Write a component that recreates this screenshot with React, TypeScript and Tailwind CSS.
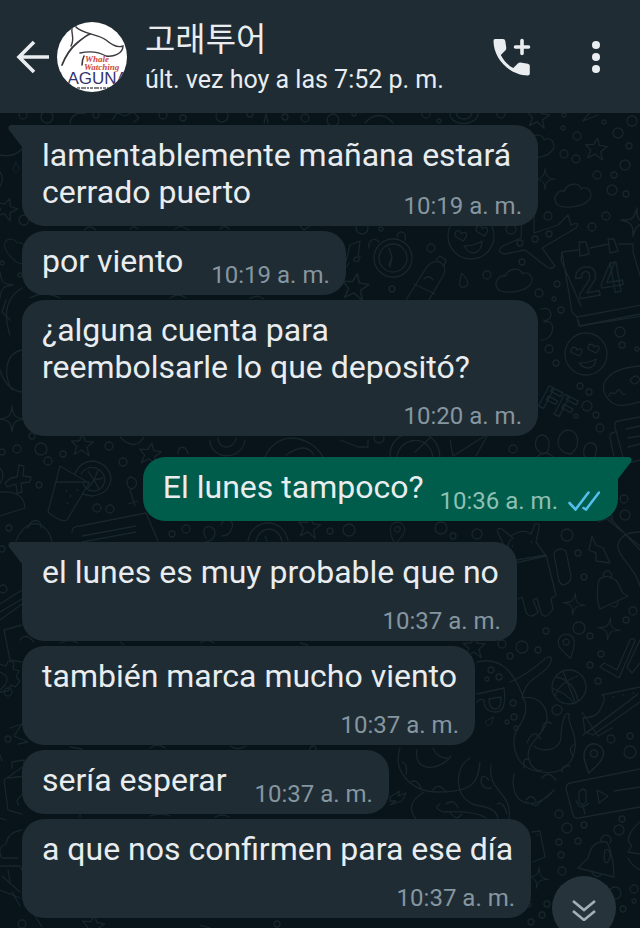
import clsx from "clsx";

type Message = {
  id: number;
  text: string;
  time: string;
  mine?: boolean;
  tail?: boolean;
  // where the time goes: beside the text, on its own row, or tucked into the last text line
  layout: "inline" | "stacked" | "tucked";
};

const messages: Message[] = [
  { id: 1, text: "lamentablemente mañana estará cerrado puerto", time: "10:19 a. m.", tail: true, layout: "tucked" },
  { id: 2, text: "por viento", time: "10:19 a. m.", layout: "inline" },
  { id: 3, text: "¿alguna cuenta para reembolsarle lo que depositó?", time: "10:20 a. m.", layout: "stacked" },
  { id: 4, text: "El lunes tampoco?", time: "10:36 a. m.", mine: true, tail: true, layout: "inline" },
  { id: 5, text: "el lunes es muy probable que no", time: "10:37 a. m.", tail: true, layout: "stacked" },
  { id: 6, text: "también marca mucho viento", time: "10:37 a. m.", layout: "stacked" },
  { id: 7, text: "sería esperar", time: "10:37 a. m.", layout: "inline" },
  { id: 8, text: "a que nos confirmen para ese día", time: "10:37 a. m.", layout: "stacked" },
];

const dots = [
  [23, 115, 4], [47, 117, 6], [96, 115, 3], [163, 115, 4], [183, 118, 3], [222, 116, 6], [250, 114, 3], [285, 117, 3], [305, 118, 4],
  [333, 120, 6], [354, 114, 2], [426, 114, 4], [439, 121, 2], [501, 114, 4], [564, 115, 2], [604, 122, 2], [632, 121, 5],
  [563, 128, 2], [577, 136, 4], [618, 133, 5], [629, 146, 3], [564, 154, 4], [576, 159, 4], [625, 165, 5], [597, 175, 4], [614, 175, 3],
  [612, 190, 5], [626, 194, 3], [548, 216, 4], [606, 216, 4], [592, 227, 4], [535, 239, 3], [549, 234, 3], [520, 243, 3], [511, 229, 5],
  [431, 248, 4], [392, 289, 3], [487, 275, 4], [522, 262, 3], [539, 293, 4], [557, 284, 3], [554, 299, 2], [561, 310, 3], [24, 220, 5],
  [20, 275, 2], [2, 263, 2], [362, 228, 6], [381, 229, 2], [549, 349, 4], [556, 363, 3], [620, 332, 5], [622, 345, 3], [637, 349, 2],
  [580, 386, 3], [589, 392, 3], [587, 406, 5], [576, 416, 2], [596, 415, 3], [600, 428, 4], [513, 449, 4], [379, 438, 5], [2, 452, 3],
  [17, 449, 4], [41, 449, 6], [48, 461, 4], [63, 454, 3], [32, 436, 3], [109, 446, 4], [123, 462, 4], [39, 485, 3], [97, 508, 4],
  [110, 509, 4], [9, 528, 3], [2, 549, 3], [3, 589, 4], [172, 534, 3], [186, 529, 4], [624, 499, 4], [609, 490, 3], [625, 515, 5],
  [330, 531, 3], [349, 530, 6], [441, 528, 6], [453, 536, 3], [477, 534, 5], [567, 535, 6], [578, 553, 3], [584, 577, 3],
  [633, 611, 4], [626, 620, 3], [579, 628, 6], [590, 636, 3], [546, 631, 3], [522, 647, 6], [538, 650, 3], [502, 644, 4], [510, 656, 3],
  [601, 654, 3], [590, 665, 3], [598, 681, 3], [491, 670, 3], [499, 677, 3], [487, 679, 2], [557, 710, 5], [514, 717, 3], [507, 722, 2],
  [513, 703, 3], [516, 728, 2], [611, 739, 4], [630, 736, 3], [630, 752, 6], [559, 814, 4], [567, 828, 5], [584, 825, 3], [622, 819, 3],
  [619, 830, 5], [559, 842, 3], [578, 841, 3], [561, 855, 3], [562, 871, 4], [615, 893, 6], [634, 889, 4], [623, 909, 3], [634, 901, 2],
  [547, 904, 3], [542, 915, 3], [531, 922, 3], [529, 905, 2], [8, 739, 3], [22, 924, 4], [277, 924, 3], [8, 692, 4], [313, 749, 3],
];

const star = "M0-11 3-4 11-4 5 2 8 10 0 5-7 10-5 2-11-3-3-4Z";
const spark = "M0-13C1-3 3-1 13 0 3 1 1 3 0 13-1 3-3 1-13 0-3-1-1-3 0-13Z";
const pin = "M0 14C-5 6-8 3-8-3A8 8 0 0 1 8-3C8 3 4 7 0 14ZM3-3A3 3 0 1 1-3-3 3 3 0 0 1 3-3";
const cloud = "M-17 6C-22-2-12-9-8-6-4-14 8-13 9-6 17-9 22 2 14 7 8 12-12 12-17 6Z";
const drop = "M0-7C4-1 5 2 4 5 2 8-3 8-4 5-5 2-2-2 0-7Z";

const doodles: [string, string][] = [
  [star, "translate(538 117) rotate(10)"],
  [star, "translate(596 149) rotate(8)"],
  [star, "translate(6 209) rotate(20)"],
  [star, "translate(355 287) rotate(10) scale(1.2)"],
  [star, "translate(82 445) rotate(5)"],
  [star, "translate(150 454) rotate(10)"],
  [star, "translate(309 527) rotate(10)"],
  [star, "translate(474 647) rotate(4)"],
  [star, "translate(93 926) rotate(10)"],
  [spark, "translate(545 179) scale(.8)"],
  [spark, "translate(635 222) rotate(8) scale(1.1)"],
  [spark, "translate(0 285)"],
  [spark, "translate(12 419)"],
  [spark, "translate(574 604) rotate(8) scale(.85)"],
  [spark, "translate(609 629) rotate(8) scale(.85)"],
  [spark, "translate(538 878) rotate(8) scale(.8)"],
  [pin, "translate(567 645) rotate(-15)"],
  [pin, "translate(593 757) rotate(15) scale(1.2)"],
  [pin, "translate(397 532) rotate(10) scale(.9)"],
  [cloud, "translate(573 196) rotate(-8)"],
  [cloud, "translate(514 281) rotate(-8)"],
  [cloud, "translate(536 147) rotate(-8)"],
  [cloud, "translate(17 251) rotate(50) scale(.8)"],
  [drop, "translate(463 280) rotate(-10)"],
  [drop, "translate(16 167) scale(.7)"],
  [drop, "translate(490 721) rotate(40) scale(.7)"],
];

const scenes = [
  // header edge: cake, shirt, rings, paper plane
  "M70 124c0-8 8-13 15-10M112 120l5-7 8 3 8-4 6 6-5 4M264 123l2-9 2 9M365 123c8-10 20-10 28 0M450 113c-1 14 28 14 28 0M456 113c2 8 14 8 16 0M583 121l7-9M583 121l15-6",
  // whale fin and balloons on the left margin
  "M0 155q14 3 22-6M0 172q5 7 0 14M22 288C2 300 5 320 10 335M6 300l-4 12 8 8M22 350C5 353 3 375 12 390M0 370q6 20 22 22",
  // notes, alarm clock, bottle
  "M346 262l4-17 10-4-2 16M346 262q-6-2-4 4t7-3M358 257q-5 0-4 4 6 2 6-5",
  "M412 258a19 19 0 1 1-38 0 19 19 0 0 1 38 0M407 258a14 14 0 1 1-28 0 14 14 0 0 1 28 0M389 248l3 9-3 8M392 257l-2 10M369 248c-1-10 7-10 10-6M397 237c1-8 10-6 8 3",
  "M406 300l20-32q5-8 14-6 8 6 3 14l-16 27M436 260l4-4 6 4-2 6M414 284l21 10M424 279q5-5 9 1",
  // smiling faces
  "M494 236a23 23 0 1 1-46 0 23 23 0 0 1 46 0M455 236c0-8 6-6 6-2 4-4 9 0 2 7ZM476 231c0-8 6-6 6-2 4-4 9 0 2 7ZM464 246q10 0 18-5 0 10-8 12-6 0-10-7",
  "M607 354a21 21 0 1 1-42 0 21 21 0 0 1 42 0M571 352c0-7 6-5 6-2 4-3 8 0 2 6ZM588 349c0-7 6-5 6-2 4-3 8 0 2 6ZM579 363q10 0 17-4-1 8-7 9-6 0-10-5",
  // plane
  "M534 215v18l24-8 10-10 3 10q10-4 5 3l-34 20 13 18q-3 4-8 1l-22-17-20 4q-10-2-2-8l18-8 1-22",
  // calendar
  "M578 250l-16 2 10 60 5 5 65-12M562 252l-1 8 20 46M590 248l19-4M619 244h14v8l9 30M579 242h7l3 12-9 2ZM608 239h6l4 12-8 2ZM577 317l2 9 63-10",
  // doughnut and ice cream behind the third bubble
  "M640 366c-30 2-42 16-34 30 8 15 25 8 34 6M609 396c2-8 5 2 8-5 4-5 4 6 8 3M630 380q7-8 10 0-6 8-10 0M541 309c14-4 12 14 2 11M541 340c14 0 16-22 3-18M578 320l2 6 60-12",
  // balloons, stopwatch, newspaper
  "M541 453c-9-5-6-19 2-18 8 2 8 16 1 19ZM566 453c-14-6-7-23 2-23 10 0 14 15 3 24ZM588 460c-8-5-4-19 4-17 8 2 4 13 0 18M537 457q8-8 16 0",
  "M390 457c-2-30 48-36 50 0M397 457c2-20 32-24 36 0M415 452l16-15M450 440l3 16 35-22-12 22M340 440l18 7h10v-7",
  "M640 417l-22 4q-4 1-3 6l8 30M615 432q-6 1-5 6l4 18M626 429l14-3M628 438l12-2M628 447l12-3M602 470l38-10",
  // drink with lemon, lollipop, wallet
  "M60 466l29 17-22 37q-6 3-19-8ZM55 482l34 0M75 474q5-13 19-13 16 4 17 18-2 15-19 17l-10-2M81 474c8-12 24-6 24 7-4 14-20 12-22 2M94 480l-6-9M94 480l4-10M94 480l9-2M94 480l5 9M94 480l-6 8M66 491h1M70 496h1M77 490h1M67 503h1",
  "M130 477a6 6 0 1 1 1 12 7 7 0 0 1-1-12M130 490l5 16M128 504l10-3M11 478l6-1 2-12 5 1-1 10 8 1-1 5-9 1 1 9-5 1-1-9-9 3-2-4ZM0 492q24-2 25 16L0 516M0 468q6 7 0 15",
  "M72 532q0-6 8-6l66-13 12 28M82 536l54-10M82 542l54-10M16 541c10-24 30-22 36 0M28 528c2-10 14-10 13 0",
  "M210 440c0 20 32 22 35 0M218 438c0 12 16 12 18 0M265 457c12-28 46-22 58 0M286 455q20-14 28 0M120 437q15 15 24 0M178 454c0-9 8-9 10 0",
  // quotes and compass above the fifth bubble
  "M206 538c-8-14 8-14 9-6 0 6-4 9-9 10M221 525c3-8 14-6 11 3-2 6-6 8-10 8M248 541c4-24 36-24 40 0M256 541c4-16 22-16 26 0M265 536l2 5",
  // robot
  "M509 552c-2-8 0-12 4-14l-11-9q-6-2-4 4l9 19ZM511 536q12-8 20-2l4-10q6-1 4 4l-3 14 10 14-35 8M516 560l30-5 10 40-5 4 2 10q-8 12-12 4l-4-15-4 2 5 12q-8 8-12 0l-4-15-4 2M554 555q0-6 8-6l4 2 5 25q0 8-9 9l-3-4ZM512 546h1M531 542h1",
  // bolt, guitar, bell
  "M592 536l-3 14 7 3 0 8 14 2-7-15-7-3ZM598 522l12-4 30 32M608 520l32 26M640 532q-18 0-22 12c-2 12 18 24 22 42M607 516q9-2 4 6",
  "M598 585c0-10 12-12 20-2 4 8 2 9 10 13l-28 13q-4-8-2-24M604 577a4 4 0 1 1 6 1M612 606q5 3 6-4",
  // check marks, ball, sneaker
  "M600 667l4-4 13 7 13-30q4-3 5 1l-16 37ZM640 640l-13 27 5 6 8-10M586 687a17 17 0 1 1-34 0 17 17 0 0 1 34 0M556 677q18 3 22 24M563 671l12 31M578 676q-18 6-23 20M552 688q16 6 22 16M602 695q4 2 1 8c-4 12-8 14-20 15l2 14 8 3 47-33M602 695l38-8M588 732l50-38M613 697h1M623 695h1M633 693h1",
  // octopus
  "M477 662c24-6 38 10 48 40 4 15-8 25-10 32-4 16 4 32 18 36 25 8 40-4 42-22 2-18-8-22-6-34-4-4-8 10-8 24-2 14-20 14-27 8M510 682c10-4 20-10 36-24q8-4 4 6c-8 14-24 12-28 34 18-4 28 12 24 26-4 12-18 18-18 32 2 12 10 16 14 14",
  "M477 694l27-6q3 24-8 24-12 0-12-12-4-2-7 2M489 699l12-2q0 13-6 12-6 0-6-10M400 748c-8 24 12 44 38 44 36 0 40-10 42-30M417 750c-4 22 22 22 34 6M433 748q4 10 14 10M470 758c-16 8-18 44 10 48 14 2 18 8 18 14M491 765c-4 28 22 26 18 54M514 774c-6 30 20 40 40 16l-18 16-10-4M424 792q-20 12-8 27M440 804q-8 4 4 8 30-2 42 6M446 804q8-6 12 4M450 812q6 10 12 2",
  "M402 762q6 2 4 12M411 782q6-4 11 8M433 790q6-8 13 2M489 780q-8-8-8 2 2 8 10 6M497 804q6-4 10 10M541 739q-8-12-14 4M530 760q-8-4-6 8M552 724q-8-6-10 6M575 744q-8 4-2 12M570 766q-8-2-8 6M556 780q-8-10-14-2M536 801q-4-8-10-1",
  // voice message card
  "M640 769l-70 14q-4 1-4 6l7 26q1 4 6 3l61-11M579 792q5-6 7 0v10q-3 5-7 0ZM576 800q3 12 13 3M583 806l2 8M597 790l11 6-9 7ZM614 791l26-4",
  "M583 735l38-28M612 728l-14 8-16-24M390 797l10-6-2 5 8-3-4 8-12 4 6-4-6 0Z",
  // bell, burger, camera near the scroll button
  "M607 842c-14-2-17 8-19 16l-10 10 36 9q0-20-7-35M601 841a5 5 0 1 1 9 2M592 873q5 6 9 2M605 850q6-2 5 8-4 9-6 1ZM640 822q-18 16-8 24l-4 6 12 2M628 858q4 8 12 12M532 832l8-1 5 26-12 5M537 835h1",
  // pencil, mail, gear, milk, leaf on the left margin
  "M0 604l22-14M0 612l22-13M0 620l22-16M4 630l18-5M4 630l6 30 12 2M20 640q6-8 14 2M0 664l6 2 2-5 6 2-1 6 6 2-3 6 4 4-5 6-4-2-3 6-8 1M0 672q14 6 0 18M10 728l12-4-8 12 14 6-10 2M0 755l2 6",
  "M12 762l12-2v6l-20 14 4 30 14 4M12 762v6M8 778l18-2M22 795q-8 6-3 10M0 818l6 2M22 830q-14 2-16 14-10 4-4 14h16M0 866h20l4 8M0 890l20 8M2 876l18 16M8 870l2 12M12 892l8 14M28 905l14 22M200 925l10 3",
  // sliver rows between bubbles
  "M84 230q6-6 12 0M130 229q4-4 8 0M175 229l6-3 8 4M220 229q5-5 9 0M300 226l4 4 6-4M30 298q14-8 30 0M170 298q8-6 16 0M250 298l8-2 6 3M60 643q10-5 18 0M120 642l4 3M200 643q7-5 14 0M300 643l8 2M70 747l12 2M150 748q8-6 15 0M230 746q8 5 16 0M80 817v-3M150 816q12-4 20 0M215 817q8-4 14 0",
];

function Wallpaper() {
  return (
    <svg
      aria-hidden="true"
      viewBox="0 113 640 815"
      preserveAspectRatio="xMinYMin slice"
      className="absolute inset-0 h-full w-full fill-none stroke-[#18262b] font-['Roboto',sans-serif]"
      strokeWidth="1.3"
      strokeLinecap="round"
      strokeLinejoin="round"
    >
      {dots.map(([x, y, r], i) => (
        <circle key={i} cx={x} cy={y} r={r} />
      ))}
      {doodles.map(([d, transform], i) => (
        <path key={i} d={d} transform={transform} />
      ))}
      {scenes.map((d, i) => (
        <path key={i} d={d} />
      ))}
      <text transform="translate(578 299) rotate(-10)" fontSize="42" fontWeight="700">24</text>
      <text transform="translate(537 405) rotate(28)" fontSize="32" fontWeight="900">FF</text>
    </svg>
  );
}

function Logo() {
  return (
    <svg viewBox="0 0 70 70" className="size-[70px] shrink-0 rounded-full bg-white" role="img" aria-label="Whale Watching Laguna">
      <g fill="none" stroke="#3a3a40" strokeLinecap="round">
        <path d="M5 43C9 33 14 26 20 21 26 16 30 13 33 12" strokeWidth="1.8" />
        <path d="M14 24C18 16 14 12 15 6" strokeWidth="1.4" />
        <path d="M18 4C24 12 42 12 49 18 56 24 61 26 66 24 66 32 56 35 49 34 42 30 32 29 23 31" strokeWidth="1.4" />
        <path d="M27 34q-2 4-2 9" strokeWidth="1.6" />
      </g>
      <g className="fill-[#cf4a40] font-['Liberation_Serif',serif] font-bold italic">
        <text x="28" y="40" fontSize="9">Whale</text>
        <text x="27" y="48" fontSize="9">Watching</text>
      </g>
      <text x="1" y="62" fontSize="17" className="fill-[#33346e] font-['Liberation_Sans',sans-serif]">
        LAGUNA
      </text>
      <path d="M20 66H52" stroke="#55555c" strokeWidth="1.4" strokeDasharray="3 1 5 1 2 1" />
    </svg>
  );
}

function Header() {
  return (
    <header className="flex h-[113px] items-center bg-[#1f2c34] pr-10 pl-4 text-[#e9edf0]">
      <button type="button" aria-label="Atrás" className="mr-2">
        <svg viewBox="0 0 33 34" className="h-[34px] w-[33px] fill-none stroke-current" strokeWidth="3.6">
          <path d="M33 17H4M18 2 3 17l15 15" />
        </svg>
      </button>
      <Logo />
      <div className="ml-[18px] min-w-0 flex-1 pt-1.5">
        <h1 className="font-['Roboto','Noto_Sans_CJK_KR',sans-serif] text-[33px] leading-10">고래투어</h1>
        <p className="text-[25px] leading-10">últ. vez hoy a las 7:52 p. m.</p>
      </div>
      <button type="button" aria-label="Llamar">
        <svg viewBox="0 0 38 38" className="size-[38px] fill-current">
          <path d="M2 1H10q2 0 2.300 2l1 7q0 1.500-1 2.500l-4.500 4.500c3 6 7 10 12.500 13l4.500-4.500q1-1 2.500-1l7.500 1.300q2 .3 2 2.200v7.500q0 2-2 2C17 37.500.5 21 .5 3q0-2 1.500-2Z" />
          <path d="M29 2.500v13M22.500 9h13" fill="none" stroke="currentColor" strokeWidth="3.600" strokeLinecap="round" />
        </svg>
      </button>
      <button type="button" aria-label="Más opciones" className="ml-[61px]">
        <svg viewBox="0 0 8 34" className="h-[34px] w-2 fill-current">
          <circle cx="4" cy="5" r="4" />
          <circle cx="4" cy="17" r="4" />
          <circle cx="4" cy="29" r="4" />
        </svg>
      </button>
    </header>
  );
}

function Ticks() {
  return (
    <svg viewBox="0 0 32 20" className="h-5 w-8 fill-none stroke-[#53bdeb]" strokeWidth="2.6" strokeLinecap="round" role="img" aria-label="Leído">
      <path d="M1.500 12 7.500 18.500 20.500 1.500M15.500 17 18 18.500 31 1.500" />
    </svg>
  );
}

function Bubble({ message }: { message: Message }) {
  const { id, text, time, mine, tail, layout } = message;

  return (
    <li
      className={clsx(
        "relative max-w-[516px] rounded-[22px] pt-3 pb-1.5 pl-5",
        mine ? "self-end bg-[#005c4b] pr-[18px]" : "self-start bg-[#1f2c34] pr-4",
        tail && (mine ? "rounded-tr-none" : "rounded-tl-none"),
        tail && id > 1 && "mt-4",
        layout === "inline" && "flex items-end",
        layout === "stacked" && "flex flex-col",
        layout === "tucked" && "flow-root"
      )}
    >
      {tail && (
        <svg
          aria-hidden="true"
          viewBox="0 0 15 22"
          className={clsx(
            "absolute top-0 h-[22px] w-[15px]",
            mine ? "-right-3.5 -scale-x-100 fill-[#005c4b]" : "-left-3.5 fill-[#1f2c34]"
          )}
        >
          <path d="M15 0H3Q-1 1 1 5L14 22H15Z" />
        </svg>
      )}
      {layout === "tucked" ? (
        <p className="text-[32px] leading-[37px] text-[#e9edef]">
          {text}
          <time className="float-right mt-[18px] text-2xl leading-7 text-[#8696a0]">{time}</time>
        </p>
      ) : (
        <>
          <p className={clsx("mb-[9px] text-[32px] leading-[37px] text-[#e9edef]", layout === "stacked" && "pr-0.5")}>{text}</p>
          <div
            className={clsx(
              "flex items-center gap-2.5 text-2xl leading-7",
              mine ? "text-[#8fc0b4]" : "text-[#8696a0]",
              layout === "inline" && (mine ? "ml-4" : "ml-7"),
              layout === "stacked" && "mt-[7px] self-end"
            )}
          >
            <time>{time}</time>
            {mine && <Ticks />}
          </div>
        </>
      )}
    </li>
  );
}

export default function App() {
  return (
    <div className="flex min-h-screen flex-col bg-[#08131a] font-['Roboto',sans-serif]">
      <Header />
      <main className="relative flex-1 overflow-hidden">
        <Wallpaper />
        <ul className="relative flex flex-col gap-[5px] px-[22px] pt-3 pb-2">
          {messages.map((m) => (
            <Bubble key={m.id} message={m} />
          ))}
        </ul>
        <button
          type="button"
          aria-label="Ir al último mensaje"
          className="absolute right-6 -bottom-3 flex size-16 items-center justify-center rounded-full bg-[#26333a] pt-1 text-[#a3b0b8]"
        >
          <svg viewBox="0 0 24 22" className="h-[22px] w-6 fill-none stroke-current" strokeWidth="2.6">
            <path d="M1 2 12 11 23 2M1 12 12 21 23 12" />
          </svg>
        </button>
      </main>
    </div>
  );
}
